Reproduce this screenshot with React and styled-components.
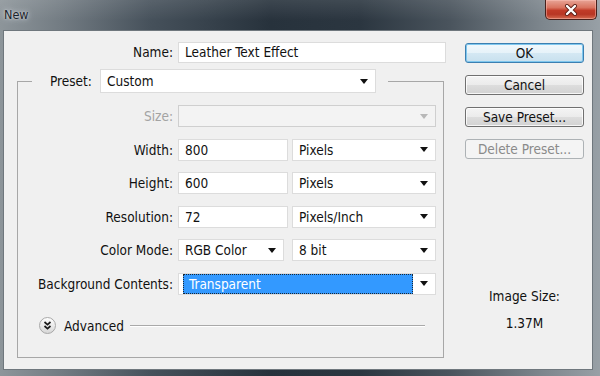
import React from 'react';
import styled, { createGlobalStyle } from 'styled-components';

const Global = createGlobalStyle`
  html, body { margin: 0; padding: 0; width: 600px; height: 376px; overflow: hidden; }
  body { font-family: "DejaVu Sans Condensed", "Liberation Sans", sans-serif; font-size: 13.5px; color: #111; }
  * { box-sizing: border-box; }
`;

const Window = styled.div`
  width: 600px;
  height: 376px;
  display: flex;
  flex-direction: column;
  background: linear-gradient(90deg, #8d959a 0%, #737c83 10%, #46515b 25%, #27323c 45%, #2b3640 60%, #4a545d 75%, #7c858c 90%, #98a0a6 100%);
`;

const TitleBar = styled.div`
  height: 30px;
  flex: none;
  display: flex;
  justify-content: space-between;
  align-items: flex-start;
  padding: 0 3px 0 4px;
  background: linear-gradient(180deg, rgba(255,255,255,0.10), rgba(255,255,255,0) 70%);
`;

const Title = styled.span`
  font-family: "DejaVu Sans Condensed", "Liberation Sans", sans-serif;
  font-size: 12.5px;
  line-height: 29px;
  color: #1c242b;
  text-shadow: 0 0 6px rgba(230,235,240,0.9), 0 0 2px rgba(230,235,240,0.8);
`;

const CloseButton = styled.div`
  width: 52px;
  height: 20px;
  display: flex;
  align-items: center;
  justify-content: center;
  border: 1px solid #47201b;
  border-top: none;
  border-radius: 0 0 5px 5px;
  background: linear-gradient(180deg, #e8a597 0%, #d9735f 40%, #c13b28 55%, #b83624 75%, #d46a50 100%);
  box-shadow: inset 0 0 0 1px rgba(255,200,190,0.45);
`;

const FrameBody = styled.div`
  flex: 1;
  display: flex;
  padding: 0 7px 6px 3px;
`;

const Client = styled.div`
  flex: 1;
  display: flex;
  align-items: flex-start;
  background: #f0f0f0;
  border: 1px solid #6f777d;
  padding: 11px 8px 0 0;
`;

const MainColumn = styled.div`
  width: 442px;
  display: flex;
  flex-direction: column;
`;

const NameRow = styled.div`
  display: grid;
  grid-template-columns: 169px 268px;
  column-gap: 5px;
  height: 21px;
`;

const Label = styled.label`
  text-align: right;
  line-height: ${p => p.$h || 22}px;
  white-space: nowrap;
  color: ${p => (p.$disabled ? '#a3a3a3' : '#111')};
`;

const TextField = styled.div`
  height: ${p => p.$h || 22}px;
  width: ${p => (p.$w ? `${p.$w}px` : 'auto')};
  background: #fff;
  border: 1px solid #dcdcdc;
  padding-left: 6px;
  line-height: ${p => (p.$h || 22) - 2}px;
  white-space: nowrap;
  overflow: hidden;
`;

const Select = styled.div`
  height: ${p => p.$h || 22}px;
  width: ${p => (p.$w ? `${p.$w}px` : '100%')};
  display: flex;
  align-items: center;
  background: ${p => (p.$disabled ? '#f3f3f3' : '#fff')};
  border: 1px solid ${p => (p.$disabled ? '#cfcfcf' : '#dcdcdc')};
  padding: 0 7px 0 6px;
  white-space: nowrap;
`;

const SelectText = styled.span`
  flex: 1;
  line-height: 20px;
`;

const Highlight = styled.span`
  flex: 1;
  align-self: stretch;
  margin: 0 7px 0 -2px;
  background: #3399ff;
  border: 1px dotted #1b2733;
  color: #fff;
  padding-left: 5px;
  line-height: 18px;
`;

const Arrow = styled.span`
  width: 0;
  height: 0;
  border-left: 4px solid transparent;
  border-right: 4px solid transparent;
  border-top: 5px solid ${p => (p.$disabled ? '#b8b8b8' : '#111')};
`;

const GroupBox = styled.fieldset`
  margin: 6px 0 0 13px;
  padding: 0 0 22px 0;
  width: 427px;
  min-inline-size: 0;
  border: 1px solid #a7a7a7;
`;

const Legend = styled.legend`
  margin-left: 14px;
  padding: 0 12px 0 18px;
`;

const LegendInner = styled.div`
  display: flex;
  align-items: center;
  gap: 5px;
`;

const LegendLabel = styled.span`
  width: 45px;
  line-height: 24px;
`;

const FormGrid = styled.div`
  display: grid;
  grid-template-columns: 155px 258px;
  column-gap: 5px;
  row-gap: 11.5px;
  padding-top: 12px;
`;

const Pair = styled.div`
  display: flex;
  justify-content: space-between;
`;

const AdvancedRow = styled.div`
  display: flex;
  align-items: center;
  height: 18px;
  margin: 22px 18px 0 21px;
`;

const AdvancedText = styled.span`
  margin: 0 6px 0 8px;
  line-height: 18px;
`;

const Rule = styled.div`
  flex: 1;
  border-top: 1px solid #a9a9a9;
  border-bottom: 1px solid #fff;
`;

const ButtonColumn = styled.div`
  width: 119px;
  margin-left: 19px;
  padding-top: 1px;
  display: flex;
  flex-direction: column;
  gap: 12px;
`;

const Button = styled.button`
  height: 20px;
  width: 100%;
  padding: 0;
  font: inherit;
  line-height: 18px;
  color: ${p => (p.disabled ? '#8a8a8a' : '#111')};
  border: 1px solid ${p => (p.$default ? '#3c7fb1' : p.disabled ? '#adb2b5' : '#707070')};
  border-radius: 3px;
  background: ${p =>
    p.disabled
      ? '#f4f4f4'
      : p.$default
      ? 'linear-gradient(180deg, #f1f8fc 0%, #e6f2f9 50%, #d4e8f3 51%, #c8e0ee 100%)'
      : 'linear-gradient(180deg, #f4f4f4 0%, #ebebeb 50%, #dddddd 51%, #d2d2d2 100%)'};
  box-shadow: ${p => (p.$default ? 'inset 0 0 0 1px #7fc7ee' : p.disabled ? 'none' : 'inset 0 0 0 1px rgba(255,255,255,0.8)')};
`;

const Info = styled.div`
  margin-top: 117px;
  display: flex;
  flex-direction: column;
  align-items: center;
  gap: 11px;
  line-height: 16px;
`;

const fields = [
  { label: 'Width:', value: '800', unit: 'Pixels', w: 110 },
  { label: 'Height:', value: '600', unit: 'Pixels', w: 110 },
  { label: 'Resolution:', value: '72', unit: 'Pixels/Inch', w: 110 },
];

const AdvancedIcon = () => (
  <svg width="17" height="17" viewBox="0 0 17 17">
    <defs>
      <linearGradient id="adv" x1="0" y1="0" x2="0" y2="1">
        <stop offset="0" stopColor="#ffffff" />
        <stop offset="1" stopColor="#d6d6d6" />
      </linearGradient>
    </defs>
    <circle cx="8.5" cy="8.5" r="8" fill="url(#adv)" stroke="#a8a8a8" />
    <path d="M5.5 5 L8.5 7.6 L11.5 5 M5.5 9 L8.5 11.6 L11.5 9" fill="none" stroke="#1a1a1a" strokeWidth="1.7" />
  </svg>
);

const CloseIcon = () => (
  <svg width="14" height="12" viewBox="0 0 14 12">
    <path d="M3 2 L11 10 M11 2 L3 10" stroke="#5a1d14" strokeWidth="4" strokeLinecap="round" />
    <path d="M3 2 L11 10 M11 2 L3 10" stroke="#fff" strokeWidth="2.4" strokeLinecap="round" />
  </svg>
);

export default function App() {
  return (
    <>
      <Global />
      <Window>
        <TitleBar>
          <Title>New</Title>
          <CloseButton>
            <CloseIcon />
          </CloseButton>
        </TitleBar>
        <FrameBody>
          <Client>
            <MainColumn>
              <NameRow>
                <Label $h={21}>Name:</Label>
                <TextField $h={21}>Leather Text Effect</TextField>
              </NameRow>
              <GroupBox>
                <Legend>
                  <LegendInner>
                    <LegendLabel>Preset:</LegendLabel>
                    <Select $w={276} $h={24}>
                      <SelectText>Custom</SelectText>
                      <Arrow />
                    </Select>
                  </LegendInner>
                </Legend>
                <FormGrid>
                  <Label $disabled>Size:</Label>
                  <Select $disabled>
                    <SelectText />
                    <Arrow $disabled />
                  </Select>
                  {fields.map(f => (
                    <React.Fragment key={f.label}>
                      <Label>{f.label}</Label>
                      <Pair>
                        <TextField $w={f.w}>{f.value}</TextField>
                        <Select $w={144}>
                          <SelectText>{f.unit}</SelectText>
                          <Arrow />
                        </Select>
                      </Pair>
                    </React.Fragment>
                  ))}
                  <Label>Color Mode:</Label>
                  <Pair>
                    <Select $w={106}>
                      <SelectText>RGB Color</SelectText>
                      <Arrow />
                    </Select>
                    <Select $w={144}>
                      <SelectText>8 bit</SelectText>
                      <Arrow />
                    </Select>
                  </Pair>
                  <Label>Background Contents:</Label>
                  <Select>
                    <Highlight>Transparent</Highlight>
                    <Arrow />
                  </Select>
                </FormGrid>
                <AdvancedRow>
                  <AdvancedIcon />
                  <AdvancedText>Advanced</AdvancedText>
                  <Rule />
                </AdvancedRow>
              </GroupBox>
            </MainColumn>
            <ButtonColumn>
              <Button $default>OK</Button>
              <Button>Cancel</Button>
              <Button>Save Preset...</Button>
              <Button disabled>Delete Preset...</Button>
              <Info>
                <span>Image Size:</span>
                <span>1.37M</span>
              </Info>
            </ButtonColumn>
          </Client>
        </FrameBody>
      </Window>
    </>
  );
}
